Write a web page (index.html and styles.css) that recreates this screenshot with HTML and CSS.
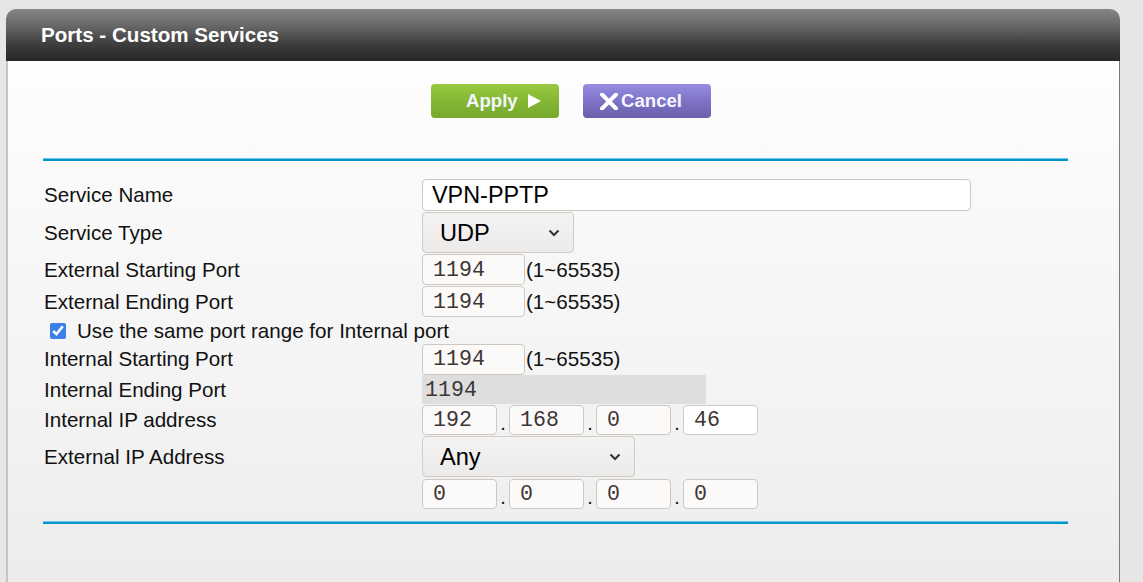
FILE: index.html
```html
<!DOCTYPE html>
<html>
<head>
<meta charset="utf-8">
<link rel="stylesheet" href="styles.css">
</head>
<body>
<div class="panel">
  <div class="panel-head">Ports - Custom Services</div>
  <div class="panel-body">
    <div class="actions">
      <button class="btn btn-apply">Apply
        <svg class="ico-play" width="13" height="14" viewBox="0 0 13 14"><path d="M0 0 L13 7 L0 14 Z" fill="#fff"/></svg>
      </button>
      <button class="btn btn-cancel">
        <svg class="ico-x" width="18" height="17" viewBox="0 0 18 17"><path d="M2 1.5 L16 15.5 M16 1.5 L2 15.5" stroke="#fff" stroke-width="4" stroke-linecap="square"/></svg>Cancel
      </button>
    </div>
    <div class="rule"></div>
    <div class="form">
      <div class="row row-name">
        <div class="label">Service Name</div>
        <div class="ctrl"><input class="text text-name" type="text" value="VPN-PPTP"></div>
      </div>
      <div class="row row-select">
        <div class="label">Service Type</div>
        <div class="ctrl">
          <div class="select-wrap sel-type">
            <select class="select"><option>UDP</option></select>
            <svg class="chev" width="12" height="8" viewBox="0 0 12 8"><path d="M1.5 1.5 L6 6 L10.5 1.5" fill="none" stroke="#333" stroke-width="2"/></svg>
          </div>
        </div>
      </div>
      <div class="row row-port">
        <div class="label">External Starting Port</div>
        <div class="ctrl"><input class="mono port" type="text" value="1194"><span class="range">(1~65535)</span></div>
      </div>
      <div class="row row-port">
        <div class="label">External Ending Port</div>
        <div class="ctrl"><input class="mono port" type="text" value="1194"><span class="range">(1~65535)</span></div>
      </div>
      <div class="row row-check">
        <label class="check"><input type="checkbox" checked> Use the same port range for Internal port</label>
      </div>
      <div class="row row-port row-port-int">
        <div class="label">Internal Starting Port</div>
        <div class="ctrl"><input class="mono port" type="text" value="1194"><span class="range">(1~65535)</span></div>
      </div>
      <div class="row row-ro">
        <div class="label">Internal Ending Port</div>
        <div class="ctrl"><div class="mono readonly">1194</div></div>
      </div>
      <div class="row row-ip">
        <div class="label">Internal IP address</div>
        <div class="ctrl ip">
          <input class="mono oct" type="text" value="192"><span class="dot">.</span>
          <input class="mono oct" type="text" value="168"><span class="dot">.</span>
          <input class="mono oct" type="text" value="0"><span class="dot">.</span>
          <input class="mono oct white" type="text" value="46">
        </div>
      </div>
      <div class="row row-select">
        <div class="label">External IP Address</div>
        <div class="ctrl">
          <div class="select-wrap sel-any">
            <select class="select"><option>Any</option></select>
            <svg class="chev" width="12" height="8" viewBox="0 0 12 8"><path d="M1.5 1.5 L6 6 L10.5 1.5" fill="none" stroke="#333" stroke-width="2"/></svg>
          </div>
        </div>
      </div>
      <div class="row row-ip2">
        <div class="label"></div>
        <div class="ctrl ip">
          <input class="mono oct" type="text" value="0"><span class="dot">.</span>
          <input class="mono oct" type="text" value="0"><span class="dot">.</span>
          <input class="mono oct" type="text" value="0"><span class="dot">.</span>
          <input class="mono oct" type="text" value="0">
        </div>
      </div>
    </div>
    <div class="rule rule-bottom"></div>
  </div>
</div>
</body>
</html>
```
FILE: styles.css
```css
html, body {
  margin: 0;
  padding: 0;
  height: 100%;
}
body {
  background: #e6e6e6;
  font-family: "Liberation Sans", Arial, sans-serif;
  overflow: hidden;
}
.panel {
  margin: 9px 0 0 6px;
  width: 1114px;
  height: 573px;
  display: flex;
  flex-direction: column;
}
.panel-head {
  height: 52px;
  flex: none;
  box-sizing: border-box;
  padding-left: 35px;
  display: flex;
  align-items: center;
  color: #fff;
  font-weight: bold;
  font-size: 20.6px;
  border-radius: 10px 10px 0 0;
  background: linear-gradient(#858585 0%, #6a6a6a 30%, #404040 65%, #262626 100%);
}
.panel-body {
  flex: 1;
  background: linear-gradient(#ffffff 0px, #fdfdfd 30px, #f7f7f7 200px, #f2f2f2 380px, #ececec 520px);
  border-left: 2px solid #c4c4c4;
  border-right: 1px solid #7a7a7a;
  padding: 0 0 0 35px;
}
.actions {
  display: flex;
  gap: 24px;
  padding: 23px 0 0 388px;
  height: 34px;
}
.btn {
  width: 128px;
  height: 34px;
  border: none;
  border-radius: 4px;
  color: #f4f6ff;
  font-family: "Liberation Sans", Arial, sans-serif;
  font-weight: bold;
  font-size: 18.6px;
  display: flex;
  align-items: center;
  padding: 0;
}
.btn-apply {
  background: linear-gradient(#99c941, #84b734 50%, #76a92c);
  padding-left: 35px;
  gap: 10px;
}
.btn-cancel {
  background: linear-gradient(#968ce2, #7e73c6 50%, #6a5fab);
  padding-left: 17px;
  gap: 3px;
}
.ico-play { display: block; }
.ico-x { display: block; }
.rule {
  width: 1025px;
  height: 2px;
  border-top: 1px solid #74c8e6;
  background: #0096c9;
  margin-top: 40px;
}
.form {
  margin-top: 18px;
  width: 1025px;
  display: flex;
  flex-direction: column;
  gap: 1px;
}
.row {
  display: flex;
  align-items: center;
}
.label {
  width: 379px;
  flex: none;
  font-size: 20.6px;
  color: #111;
  padding-left: 1px;
  box-sizing: border-box;
}
.ctrl {
  display: flex;
  align-items: center;
}
.row-name { height: 32px; }
.row-select { height: 41px; }
.row-port { height: 31px; }
.row-port-int { height: 30px; }
.row-check { height: 25px; }
.row-ro { height: 29px; }
.row-ip { height: 30px; }
.row-ip2 { height: 30px; margin-top: 1px; }

input.text, input.mono {
  box-sizing: border-box;
  border: 1px solid #cdc8c2;
  border-radius: 4px;
  background: #fbfaf9;
  outline: none;
  margin: 0;
}
input.text-name {
  width: 549px;
  height: 32px;
  background: #fff;
  font-family: "Liberation Sans", Arial, sans-serif;
  font-size: 23.4px;
  color: #000;
  padding: 0 0 0 9px;
}
.mono {
  font-family: "Liberation Mono", "Courier New", monospace;
  font-size: 21.6px;
  color: #3c3636;
}
.port {
  width: 103px;
  height: 31px;
  padding: 0 0 0 10px;
}
.range {
  font-size: 20.6px;
  color: #111;
  padding-left: 1px;
}
.readonly {
  width: 284px;
  height: 29px;
  box-sizing: border-box;
  background: #dedede;
  padding-left: 3px;
  display: flex;
  align-items: center;
}
.ip { gap: 0; }
.oct {
  width: 75px;
  height: 30px;
  padding: 0 0 0 10px;
}
input.oct.white { background: #fff; }
.dot {
  width: 12px;
  text-align: center;
  font-size: 20px;
  align-self: flex-end;
  line-height: 24px;
  color: #111;
}
.row-check .check {
  display: flex;
  align-items: center;
  font-size: 20.6px;
  color: #111;
  padding-left: 7px;
  gap: 11px;
}
.check input {
  margin: 0;
  width: 16px;
  height: 16px;
  accent-color: #3a80e6;
}
.select-wrap {
  position: relative;
  display: block;
}
.select {
  appearance: none;
  -webkit-appearance: none;
  box-sizing: border-box;
  height: 41px;
  border: 1px solid #cfcbc6;
  border-radius: 4px;
  background: linear-gradient(#f4f3f2, #ecebea);
  font-family: "Liberation Sans", Arial, sans-serif;
  font-size: 23.6px;
  color: #000;
  padding: 0 0 0 17px;
  margin: 0;
  outline: none;
  display: block;
}
.sel-type .select { width: 152px; }
.sel-any .select { width: 213px; }
.chev {
  position: absolute;
  top: 17px;
  right: 14px;
  pointer-events: none;
}
.rule-bottom {
  margin-top: 12px;
}
```
